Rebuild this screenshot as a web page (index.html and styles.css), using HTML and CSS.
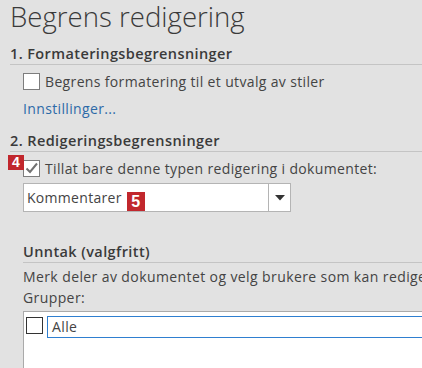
FILE: index.html
```html
<!DOCTYPE html>
<html lang="no">
<head>
    <meta charset="UTF-8">
    <title>Begrens redigering</title>
    <link rel="stylesheet" href="styles.css">
</head>
<body>

    <div class="pane">
        <h1 class="title">Begrens redigering</h1>

        <h2 class="section first">1. Formateringsbegrensninger</h2>
        <div class="block">
            <label class="check-row">
                <span class="box"></span>
                <span>Begrens formatering til et utvalg av stiler</span>
            </label>
            <a class="link" href="#">Innstillinger...</a>
        </div>

        <h2 class="section second">2. Redigeringsbegrensninger</h2>
        <div class="block">
            <label class="check-row tagged">
                <span class="badge badge-4">4</span>
                <span class="box">
                    <svg width="15" height="15" viewBox="0 0 15 15"><path d="M2.5 7.5 L6 11 L13 2.5" fill="none" stroke="#727272" stroke-width="2"/></svg>
                </span>
                <span>Tillat bare denne typen redigering i dokumentet:</span>
            </label>
            <div class="select">
                <div class="select-value">Kommentarer <span class="badge badge-5">5</span></div>
                <div class="select-arrow">
                    <svg width="10" height="6" viewBox="0 0 10 6"><path d="M0 0 H10 L5 5.5 Z" fill="#333"/></svg>
                </div>
            </div>

            <h2 class="section sub">Unntak (valgfritt)</h2>
            <p class="text">Merk deler av dokumentet og velg brukere som kan redigere dem.</p>
            <p class="text groups">Grupper:</p>
            <div class="list">
                <div class="list-row">
                    <span class="box dark"></span>
                    <span class="list-item">Alle</span>
                </div>
            </div>
        </div>
    </div>

</body>
</html>
```

FILE: styles.css
```css
* {
    margin: 0;
    padding: 0;
    box-sizing: border-box;
}

body {
    background: #e2e2e2;
    font-family: "Open Sans", "Noto Sans", sans-serif;
    color: #444;
    overflow: hidden;
}

.pane {
    padding-left: 10px;
    height: 100vh;
    overflow: hidden;
}

.title {
    font-weight: 300;
    font-size: 27.6px;
    line-height: 32px;
    color: #3a3a3a;
    white-space: nowrap;
}

.section {
    font-size: 14.5px;
    font-weight: 600;
    color: #3a3a3a;
    line-height: 20px;
    letter-spacing: 0.4px;
    border-bottom: 1px solid #c4c4c4;
    white-space: nowrap;
}

.section.first {
    margin-top: 12px;
}

.section.second {
    margin-top: 14px;
}

.block {
    padding-left: 13px;
}

.check-row {
    display: flex;
    align-items: center;
    gap: 5px;
    font-size: 14px;
    line-height: 17px;
    letter-spacing: 0.35px;
    margin-top: 8px;
    white-space: nowrap;
}

.box {
    width: 17px;
    height: 17px;
    border: 1px solid #7d7d7d;
    background: #fff;
    display: flex;
    align-items: center;
    justify-content: center;
    flex-shrink: 0;
}

.box.dark {
    border-color: #333;
}

.link {
    display: block;
    margin-top: 10px;
    font-size: 14px;
    line-height: 17px;
    letter-spacing: 0.35px;
    color: #2d6aa8;
    text-decoration: none;
}

.tagged {
    position: relative;
}

.badge {
    display: inline-block;
    background: #c1272d;
    color: #fff;
    font-weight: 700;
    text-align: center;
    font-family: "Liberation Sans", Arial, sans-serif;
    letter-spacing: 0;
}

.badge-4 {
    position: absolute;
    left: -15px;
    top: -5px;
    width: 16px;
    height: 15px;
    font-size: 14px;
    line-height: 15px;
}

.badge-5 {
    width: 18px;
    height: 19px;
    font-size: 16px;
    line-height: 19px;
    vertical-align: -4px;
    margin-left: 1px;
}

.select {
    display: flex;
    width: 268px;
    height: 29px;
    margin-top: 6px;
    border: 1px solid #b4b4b4;
    background: #fff;
}

.select-value {
    flex: 1;
    font-size: 14px;
    line-height: 27px;
    letter-spacing: 0.3px;
    padding-left: 3px;
    border-right: 1px solid #b4b4b4;
    white-space: nowrap;
}

.select-arrow {
    width: 21px;
    display: flex;
    align-items: center;
    justify-content: center;
}

.section.sub {
    margin-top: 30px;
}

.text {
    font-size: 14px;
    line-height: 20px;
    letter-spacing: 0.4px;
    white-space: nowrap;
    margin-top: 4px;
}

.groups {
    margin-top: 1px;
}

.list {
    margin-top: 3px;
    margin-right: -6px;
    height: 60px;
    background: #fff;
    border: 1px solid #aaa;
    padding: 4px 0 0 2px;
}

.list-row {
    display: flex;
    align-items: flex-start;
    gap: 4px;
}

.list-row .box {
    margin-top: 1px;
}

.list-item {
    flex: 1;
    border: 1px solid #2f7fd0;
    height: 22px;
    font-size: 14px;
    line-height: 19px;
    letter-spacing: 0.4px;
    padding-left: 4px;
}
```
